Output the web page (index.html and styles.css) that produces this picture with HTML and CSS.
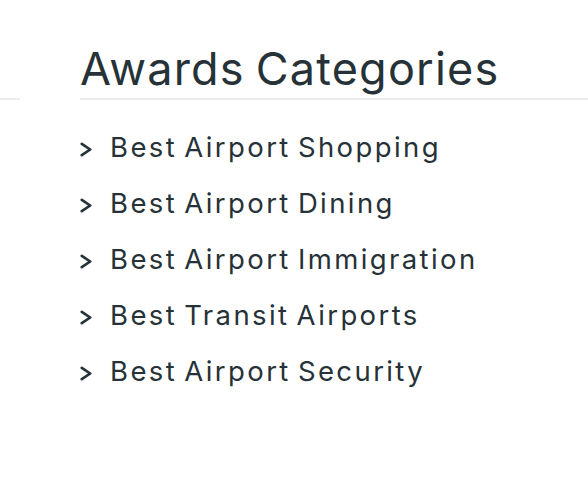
FILE: index.html
```html
<!DOCTYPE html>
<html lang="en">
<head>
<meta charset="utf-8">
<title>Awards Categories</title>
<link rel="stylesheet" href="styles.css">
</head>
<body>
<section class="awards">
  <div class="awards-head">
    <span class="head-rule"></span>
    <h1 class="awards-title">Awards Categories</h1>
  </div>
  <ul class="awards-list">
    <li class="awards-item"><svg class="chev" viewBox="0 0 12 15" width="12" height="15"><path d="M1.8 1.8 L10.2 7.5 L1.8 13.2"/></svg><span>Best Airport Shopping</span></li>
    <li class="awards-item"><svg class="chev" viewBox="0 0 12 15" width="12" height="15"><path d="M1.8 1.8 L10.2 7.5 L1.8 13.2"/></svg><span>Best Airport Dining</span></li>
    <li class="awards-item"><svg class="chev" viewBox="0 0 12 15" width="12" height="15"><path d="M1.8 1.8 L10.2 7.5 L1.8 13.2"/></svg><span>Best Airport Immigration</span></li>
    <li class="awards-item"><svg class="chev" viewBox="0 0 12 15" width="12" height="15"><path d="M1.8 1.8 L10.2 7.5 L1.8 13.2"/></svg><span>Best Transit Airports</span></li>
    <li class="awards-item"><svg class="chev" viewBox="0 0 12 15" width="12" height="15"><path d="M1.8 1.8 L10.2 7.5 L1.8 13.2"/></svg><span>Best Airport Security</span></li>
  </ul>
</section>
</body>
</html>
```

FILE: styles.css
```css
html, body {
  margin: 0;
  padding: 0;
  background: #ffffff;
}
body {
  font-family: Inter, "Liberation Sans", sans-serif;
  color: #263238;
}
.awards {
  padding-top: 42px;
}
.awards-head {
  display: flex;
  align-items: flex-end;
}
.head-rule {
  width: 20px;
  height: 0;
  border-bottom: 2px solid #ececec;
}
.awards-title {
  flex: 1;
  margin: 0 0 0 60px;
  padding-bottom: 2px;
  font-size: 45px;
  font-weight: 400;
  line-height: 54px;
  letter-spacing: 1.2px;
  word-spacing: -3px;
  border-bottom: 2px solid #ececec;
  white-space: nowrap;
}
.awards-list {
  list-style: none;
  margin: 19px 0 0 80px;
  padding: 0;
}
.awards-item {
  display: flex;
  align-items: baseline;
  gap: 18px;
  font-size: 27.5px;
  line-height: 56px;
  letter-spacing: 2.4px;
  word-spacing: -3px;
  white-space: nowrap;
}
.chev {
  flex: none;
  fill: none;
  stroke: #263238;
  stroke-width: 2.7;
  stroke-linecap: round;
  stroke-linejoin: round;
}
```
